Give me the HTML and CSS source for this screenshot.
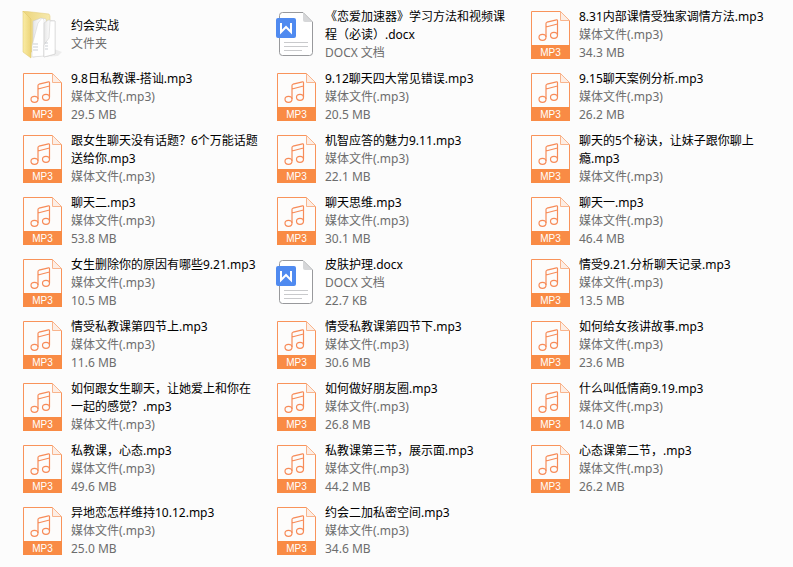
FILE: index.html
```html
<!DOCTYPE html>
<html lang="zh-CN">
<head>
    <meta charset="UTF-8">
    <meta name="viewport" content="width=device-width, initial-scale=1.0">
    <title>文件夹</title>
    <link rel="stylesheet" href="styles.css">
</head>
<body>
    <svg class="sprite" aria-hidden="true">
        <defs>
            <linearGradient id="flap" x1="0" y1="0" x2="1" y2="0">
                <stop offset="0" stop-color="#faeca6"/>
                <stop offset="1" stop-color="#ecd478"/>
            </linearGradient>
            <linearGradient id="back" x1="0" y1="0" x2="1" y2="0">
                <stop offset="0" stop-color="#ecd57c"/>
                <stop offset="1" stop-color="#f6e9ae"/>
            </linearGradient>
            <linearGradient id="sheet" x1="0" y1="0" x2="1" y2="0">
                <stop offset="0" stop-color="#e6e6e6"/>
                <stop offset="0.6" stop-color="#ffffff"/>
            </linearGradient>
        </defs>
        <symbol id="icon-folder" viewBox="-1 0 42 48">
            <path d="M20 46l15-1 4-4-8-3z" fill="#ededed"/>
            <path d="M0 0l26 3 1 2v36H8z" fill="url(#back)" stroke="#e3cb76" stroke-width="0.500"/>
            <path d="M10 10l8-3 5 1v36l-13 2z" fill="url(#sheet)" stroke="#c9c9c9" stroke-width="0.500"/>
            <path d="M15 12l4-5 2 2v36l-12 1V35z" fill="#fff" stroke="#cfcfcf" stroke-width="0.500"/>
            <path d="M21 12l4-3 7 1v33l-11 3z" fill="url(#sheet)" stroke="#c9c9c9" stroke-width="0.500"/>
            <path d="M21 34l5-7 1-17 5 0v33l-11 3z" fill="#fff" stroke="#c9c9c9" stroke-width="0.500"/>
            <path d="M10 33h5M10 36h5M10 39h5M22 32h3M22 35h3M22 38h3" stroke="#b4bac2" stroke-width="0.700"/>
            <path d="M0 0l8 8v39l-8-6z" fill="url(#flap)" stroke="#dfc468" stroke-width="0.500"/>
        </symbol>
        <symbol id="icon-doc" viewBox="-1 0 42 48">
            <path d="M5.500 1.500h20.500l9.500 9.500v30.500a3 3 0 0 1-3 3h-27a3 3 0 0 1-3-3v-37a3 3 0 0 1 3-3z" fill="#fff" stroke="#98999c"/>
            <path d="M26 2v7a2 2 0 0 0 2 2h7z" fill="#d6d7d9"/>
            <path d="M7 31.500h24M7 35.500h24M7 39.500h18" stroke="#c9cacc"/>
            <rect x="-1" y="7" width="20" height="20" rx="2" fill="#4f8af0"/>
            <path d="M4 12v9l5-5 5 5v-9" fill="none" stroke="#fff" stroke-width="2"/>
        </symbol>
        <symbol id="icon-mp3" viewBox="-1 0 42 48">
            <path d="M0.500 0.500h29l9 9v38h-38z" fill="#fdfcfb" stroke="#f9935a"/>
            <path d="M29.500 0.500v9h9z" fill="#fdeee5" stroke="#f9b48c"/>
            <path d="M15 26V12.500q0-1 1-1.300l9.500-2.400q1-.2 1 .8V24M15 16l11.500-3" fill="none" stroke="#f78b58" stroke-width="1.200"/>
            <ellipse cx="11.500" cy="26.300" rx="3.500" ry="3" fill="none" stroke="#f78b58" stroke-width="1.200"/>
            <ellipse cx="23" cy="24.300" rx="3.500" ry="3" fill="none" stroke="#f78b58" stroke-width="1.200"/>
            <rect x="0" y="34" width="39" height="14" fill="#f98b45"/>
            <text class="badge" x="19.500" y="45" text-anchor="middle">MP3</text>
        </symbol>
    </svg>

    <ul class="files">
        <li class="file">
            <svg class="icon"><use href="#icon-folder"/></svg>
            <div class="info"><p class="name">约会实战</p><p>文件夹</p></div>
        </li>
        <li class="file">
            <svg class="icon"><use href="#icon-doc"/></svg>
            <div class="info"><p class="name">《恋爱加速器》学习方法和视频课程（必读）.docx</p><p>DOCX 文档</p></div>
        </li>
        <li class="file">
            <svg class="icon"><use href="#icon-mp3"/></svg>
            <div class="info"><p class="name">8.31内部课情受独家调情方法.mp3</p><p>媒体文件(.mp3)</p><p>34.3 MB</p></div>
        </li>

        <li class="file">
            <svg class="icon"><use href="#icon-mp3"/></svg>
            <div class="info"><p class="name">9.8日私教课-搭讪.mp3</p><p>媒体文件(.mp3)</p><p>29.5 MB</p></div>
        </li>
        <li class="file">
            <svg class="icon"><use href="#icon-mp3"/></svg>
            <div class="info"><p class="name">9.12聊天四大常见错误.mp3</p><p>媒体文件(.mp3)</p><p>20.5 MB</p></div>
        </li>
        <li class="file">
            <svg class="icon"><use href="#icon-mp3"/></svg>
            <div class="info"><p class="name">9.15聊天案例分析.mp3</p><p>媒体文件(.mp3)</p><p>26.2 MB</p></div>
        </li>

        <li class="file">
            <svg class="icon"><use href="#icon-mp3"/></svg>
            <div class="info"><p class="name">跟女生聊天没有话题？6个万能话题送给你.mp3</p><p>媒体文件(.mp3)</p></div>
        </li>
        <li class="file">
            <svg class="icon"><use href="#icon-mp3"/></svg>
            <div class="info"><p class="name">机智应答的魅力9.11.mp3</p><p>媒体文件(.mp3)</p><p>22.1 MB</p></div>
        </li>
        <li class="file">
            <svg class="icon"><use href="#icon-mp3"/></svg>
            <div class="info"><p class="name">聊天的5个秘诀，让妹子跟你聊上瘾.mp3</p><p>媒体文件(.mp3)</p></div>
        </li>

        <li class="file">
            <svg class="icon"><use href="#icon-mp3"/></svg>
            <div class="info"><p class="name">聊天二.mp3</p><p>媒体文件(.mp3)</p><p>53.8 MB</p></div>
        </li>
        <li class="file">
            <svg class="icon"><use href="#icon-mp3"/></svg>
            <div class="info"><p class="name">聊天思维.mp3</p><p>媒体文件(.mp3)</p><p>30.1 MB</p></div>
        </li>
        <li class="file">
            <svg class="icon"><use href="#icon-mp3"/></svg>
            <div class="info"><p class="name">聊天一.mp3</p><p>媒体文件(.mp3)</p><p>46.4 MB</p></div>
        </li>

        <li class="file">
            <svg class="icon"><use href="#icon-mp3"/></svg>
            <div class="info"><p class="name">女生删除你的原因有哪些9.21.mp3</p><p>媒体文件(.mp3)</p><p>10.5 MB</p></div>
        </li>
        <li class="file">
            <svg class="icon"><use href="#icon-doc"/></svg>
            <div class="info"><p class="name">皮肤护理.docx</p><p>DOCX 文档</p><p>22.7 KB</p></div>
        </li>
        <li class="file">
            <svg class="icon"><use href="#icon-mp3"/></svg>
            <div class="info"><p class="name">情受9.21.分析聊天记录.mp3</p><p>媒体文件(.mp3)</p><p>13.5 MB</p></div>
        </li>

        <li class="file">
            <svg class="icon"><use href="#icon-mp3"/></svg>
            <div class="info"><p class="name">情受私教课第四节上.mp3</p><p>媒体文件(.mp3)</p><p>11.6 MB</p></div>
        </li>
        <li class="file">
            <svg class="icon"><use href="#icon-mp3"/></svg>
            <div class="info"><p class="name">情受私教课第四节下.mp3</p><p>媒体文件(.mp3)</p><p>30.6 MB</p></div>
        </li>
        <li class="file">
            <svg class="icon"><use href="#icon-mp3"/></svg>
            <div class="info"><p class="name">如何给女孩讲故事.mp3</p><p>媒体文件(.mp3)</p><p>23.6 MB</p></div>
        </li>

        <li class="file">
            <svg class="icon"><use href="#icon-mp3"/></svg>
            <div class="info"><p class="name">如何跟女生聊天，让她爱上和你在一起的感觉？.mp3</p><p>媒体文件(.mp3)</p></div>
        </li>
        <li class="file">
            <svg class="icon"><use href="#icon-mp3"/></svg>
            <div class="info"><p class="name">如何做好朋友圈.mp3</p><p>媒体文件(.mp3)</p><p>26.8 MB</p></div>
        </li>
        <li class="file">
            <svg class="icon"><use href="#icon-mp3"/></svg>
            <div class="info"><p class="name">什么叫低情商9.19.mp3</p><p>媒体文件(.mp3)</p><p>14.0 MB</p></div>
        </li>

        <li class="file">
            <svg class="icon"><use href="#icon-mp3"/></svg>
            <div class="info"><p class="name">私教课，心态.mp3</p><p>媒体文件(.mp3)</p><p>49.6 MB</p></div>
        </li>
        <li class="file">
            <svg class="icon"><use href="#icon-mp3"/></svg>
            <div class="info"><p class="name">私教课第三节，展示面.mp3</p><p>媒体文件(.mp3)</p><p>44.2 MB</p></div>
        </li>
        <li class="file">
            <svg class="icon"><use href="#icon-mp3"/></svg>
            <div class="info"><p class="name">心态课第二节，.mp3</p><p>媒体文件(.mp3)</p><p>26.2 MB</p></div>
        </li>

        <li class="file">
            <svg class="icon"><use href="#icon-mp3"/></svg>
            <div class="info"><p class="name">异地恋怎样维持10.12.mp3</p><p>媒体文件(.mp3)</p><p>25.0 MB</p></div>
        </li>
        <li class="file">
            <svg class="icon"><use href="#icon-mp3"/></svg>
            <div class="info"><p class="name">约会二加私密空间.mp3</p><p>媒体文件(.mp3)</p><p>34.6 MB</p></div>
        </li>
    </ul>
</body>
</html>
```

FILE: styles.css
```css
* {
    margin: 0;
    padding: 0;
    box-sizing: border-box;
}

body {
    padding: 4px 14px 0 17px;
    background: #fcfcfc;
    color: #6d6d6d;
    font-family: "Noto Sans", "Noto Sans CJK SC", sans-serif;
    font-size: 12px;
    line-height: 18px;
}

.sprite {
    position: absolute;
    width: 0;
    height: 0;
}

.files {
    display: grid;
    grid-template-columns: repeat(3, 1fr);
    grid-auto-rows: minmax(62px, auto);
    list-style: none;
}

.file {
    display: flex;
    align-items: center;
    gap: 7px;
    padding: 0 12px 0 5px;
}

.icon {
    flex: none;
    width: 42px;
    height: 48px;
}

.name {
    color: #000;
}

.badge {
    fill: #fff;
    font-family: "Liberation Sans", sans-serif;
    font-size: 10px;
}
```
